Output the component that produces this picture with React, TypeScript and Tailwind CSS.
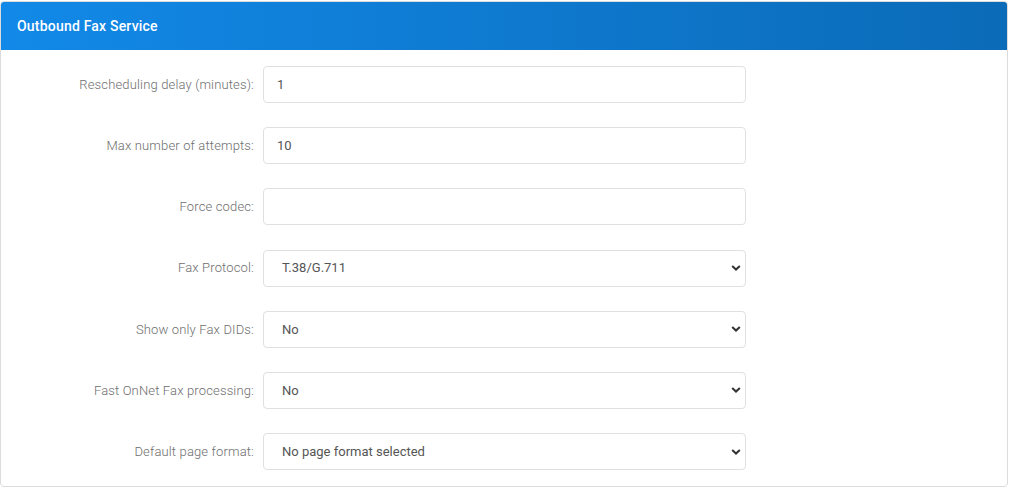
import React from "react";

const rows: { label: string; value: string; select?: boolean }[] = [
  { label: "Rescheduling delay (minutes):", value: "1" },
  { label: "Max number of attempts:", value: "10" },
  { label: "Force codec:", value: "" },
  { label: "Fax Protocol:", value: "T.38/G.711", select: true },
  { label: "Show only Fax DIDs:", value: "No", select: true },
  { label: "Fast OnNet Fax processing:", value: "No", select: true },
  { label: "Default page format:", value: "No page format selected", select: true },
];

const Chevron = () => (
  <svg
    width="10"
    height="7"
    viewBox="0 0 10 7"
    className="pointer-events-none absolute right-[4px] top-1/2 -translate-y-1/2"
  >
    <path d="M1.2 1.4 L5 5 L8.8 1.4" fill="none" stroke="#333" strokeWidth="2" />
  </svg>
);

export default function App() {
  return (
    <div className="w-[1010px] h-[487px] bg-white pt-[1px] font-['Roboto',sans-serif] text-[13px]">
      <div className="w-[1008px] h-[486px] border border-[#dcdcdc] rounded-[4px] overflow-hidden flex flex-col">
        <div className="h-[48px] shrink-0 flex items-center px-[16px] bg-gradient-to-r from-[#1289e8] to-[#0b6bb8] text-white font-medium tracking-[0.2px] text-[14px]">
          Outbound Fax Service
        </div>
        <div className="flex flex-col gap-[24.2px] pt-[16px]">
          {rows.map((r) => (
            <div key={r.label} className="flex items-center">
              <label className="w-[253px] text-right text-[#6e6e6e] font-light tracking-[0.15px] shrink-0">
                {r.label}
              </label>
              <div className="relative ml-[9px] w-[483px] h-[37px] border border-[#e0e0e0] rounded-[4px] bg-white">
                {r.select ? (
                  <>
                    <select
                      defaultValue={r.value}
                      className="appearance-none w-full h-full bg-transparent pl-[18px] pr-[24px] text-[#555] outline-none"
                    >
                      <option>{r.value}</option>
                    </select>
                    <Chevron />
                  </>
                ) : (
                  <input
                    defaultValue={r.value}
                    className="w-full h-full px-[13px] text-[#555] outline-none bg-transparent"
                  />
                )}
              </div>
            </div>
          ))}
        </div>
      </div>
    </div>
  );
}
